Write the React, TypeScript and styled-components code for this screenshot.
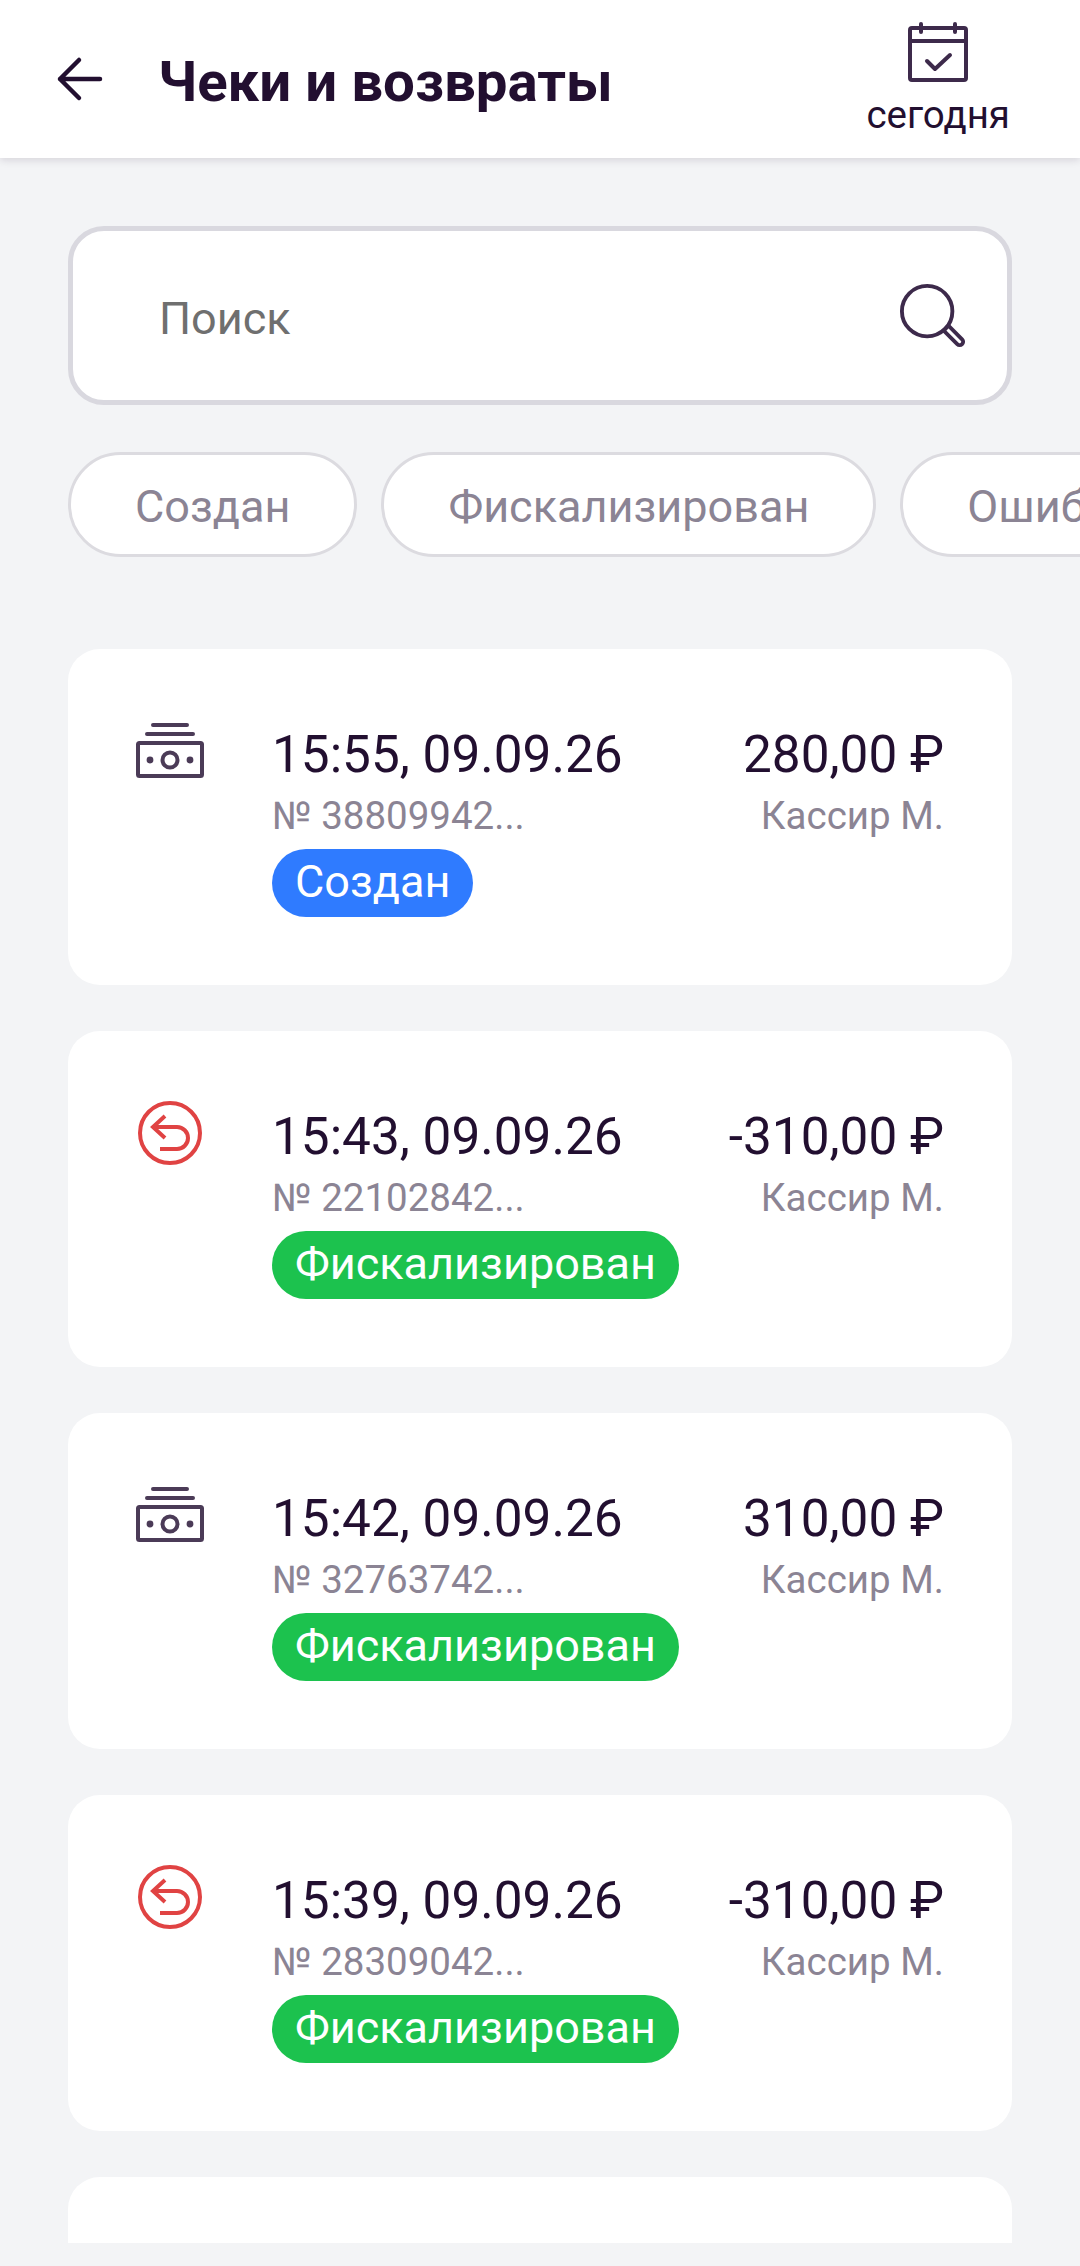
import React from 'react'
import styled, { createGlobalStyle } from 'styled-components'

const GlobalStyle = createGlobalStyle`
  html, body {
    margin: 0;
    padding: 0;
    background: #f3f4f6;
    font-family: Roboto, "Noto Sans", sans-serif;
  }
`

const Page = styled.div`
  display: flex;
  flex-direction: column;
  width: 1080px;
  height: 2266px;
  overflow: hidden;
  background: #f3f4f6;
  color: #220f30;
`

const Header = styled.header`
  display: flex;
  align-items: center;
  flex: none;
  height: 158px;
  padding: 0 70px 0 56px;
  box-sizing: border-box;
  background: #fff;
  box-shadow: 0 2px 8px rgba(34, 15, 48, 0.14);
  position: relative;
`

const BackButton = styled.div`
  display: flex;
  width: 48px;
  height: 48px;
  margin-right: 54px;
`

const Title = styled.h1`
  flex: 1;
  margin: 0;
  font-size: 56.4px;
  font-weight: 700;
  line-height: 64px;
  padding-top: 6px;
`

const DateButton = styled.div`
  display: flex;
  flex-direction: column;
  align-items: center;
  gap: 12px;
  font-size: 38.5px;
  line-height: 42px;
`

const Content = styled.main`
  display: flex;
  flex-direction: column;
  flex: 1;
  min-height: 0;
  padding-top: 68px;
`

const SearchBox = styled.div`
  display: flex;
  align-items: center;
  justify-content: space-between;
  flex: none;
  height: 179px;
  margin: 0 68px;
  padding: 0 42px 0 86px;
  box-sizing: border-box;
  border: 5px solid #d9d8df;
  border-radius: 36px;
  background: #fff;
  font-size: 45px;
  color: #6f6f6f;
`

const SearchLabel = styled.span`
  padding-top: 5px;
`

const Chips = styled.div`
  display: flex;
  flex: none;
  gap: 24px;
  margin-top: 47px;
  padding-left: 68px;
  overflow: hidden;
`

const Chip = styled.div`
  flex: none;
  height: 105px;
  padding: 0 64px;
  box-sizing: border-box;
  border: 3px solid #dcdbe0;
  border-radius: 53px;
  background: #fff;
  font-size: 45px;
  line-height: 103px;
  color: #8b8494;
`

const List = styled.div`
  display: flex;
  flex-direction: column;
  gap: 46px;
  height: 1594px;
  margin-top: 92px;
  overflow: hidden;
`

const Card = styled.article`
  display: flex;
  flex: none;
  height: 336px;
  margin: 0 68px;
  padding: 0 68px 0 0;
  box-sizing: border-box;
  border-radius: 32px;
  background: #fff;
`

const IconCell = styled.div<{ $top: number }>`
  display: flex;
  justify-content: center;
  align-items: flex-start;
  flex: none;
  width: 204px;
  padding-top: ${p => p.$top}px;
  box-sizing: border-box;
`

const Info = styled.div`
  display: flex;
  flex-direction: column;
  align-items: flex-start;
  flex: 1;
  padding-top: 71px;
`

const Time = styled.div`
  font-size: 51.3px;
  line-height: 70px;
`

const Sub = styled.div`
  margin-top: 3px;
  font-size: 38.5px;
  line-height: 46px;
  color: #8b8494;
`

const Badge = styled.div<{ $color: string }>`
  height: 68px;
  margin-top: 10px;
  padding: 0 23px;
  border-radius: 34px;
  background: ${p => p.$color};
  color: #fff;
  font-size: 45px;
  line-height: 66px;
`

const Side = styled.div`
  display: flex;
  flex-direction: column;
  align-items: flex-end;
  padding-top: 71px;
`

const CashIcon = () => (
  <svg width="68" height="56" viewBox="0 0 68 56" fill="none" stroke="#4b3b57" strokeWidth="4" strokeLinecap="round" strokeLinejoin="round">
    <path d="M17 3h34M11 12h46" />
    <rect x="2" y="21" width="64" height="33" rx="1.5" />
    <circle cx="34" cy="38" r="7.5" />
    <circle cx="14" cy="38" r="1.4" fill="#4b3b57" />
    <circle cx="54" cy="38" r="1.4" fill="#4b3b57" />
  </svg>
)

const ReturnIcon = () => (
  <svg width="64" height="64" viewBox="0 0 64 64" fill="none" stroke="#e04343" strokeWidth="4">
    <circle cx="32" cy="32" r="30" />
    <path d="M27 15L15 26 27 37" />
    <path d="M15 26h24a11 11 0 0 1 0 22H22" />
  </svg>
)

const receipts = [
  { time: '15:55, 09.09.26', num: '№ 38809942...', sum: '280,00 ₽', status: 'Создан', refund: false },
  { time: '15:43, 09.09.26', num: '№ 22102842...', sum: '-310,00 ₽', status: 'Фискализирован', refund: true },
  { time: '15:42, 09.09.26', num: '№ 32763742...', sum: '310,00 ₽', status: 'Фискализирован', refund: false },
  { time: '15:39, 09.09.26', num: '№ 28309042...', sum: '-310,00 ₽', status: 'Фискализирован', refund: true },
]

const App = () => (
  <Page>
    <GlobalStyle />
    <Header>
      <BackButton>
        <svg width="48" height="48" viewBox="0 0 48 48" fill="none" stroke="#220f30" strokeWidth="4.5" strokeLinecap="round" strokeLinejoin="round">
          <path d="M23 5L4 24l19 19M4 24h40" />
        </svg>
      </BackButton>
      <Title>Чеки и возвраты</Title>
      <DateButton>
        <svg width="60" height="60" viewBox="0 0 60 60" fill="none" stroke="#3d2a4b" strokeWidth="4" strokeLinecap="round" strokeLinejoin="round">
          <rect x="2" y="6" width="56" height="52" rx="2" />
          <path d="M2 19h56M13 2v8M47 2v8M19 39l8 8 15-14" />
        </svg>
        сегодня
      </DateButton>
    </Header>
    <Content>
      <SearchBox>
        <SearchLabel>Поиск</SearchLabel>
        <svg width="66" height="66" viewBox="0 0 68 68" fill="none" stroke="#3d2a4b" strokeWidth="4">
          <circle cx="29" cy="29" r="26" />
          <path d="M46 49l5-5 14 14a3.5 3.5 0 0 1-5 5z" />
        </svg>
      </SearchBox>
      <Chips>
        <Chip>Создан</Chip>
        <Chip>Фискализирован</Chip>
        <Chip>Ошибка</Chip>
      </Chips>
      <List>
        {receipts.map(r => (
          <Card key={r.time}>
            <IconCell $top={r.refund ? 70 : 73}>{r.refund ? <ReturnIcon /> : <CashIcon />}</IconCell>
            <Info>
              <Time>{r.time}</Time>
              <Sub>{r.num}</Sub>
              <Badge $color={r.status === 'Создан' ? '#2f7bff' : '#1cc24e'}>{r.status}</Badge>
            </Info>
            <Side>
              <Time>{r.sum}</Time>
              <Sub>Кассир М.</Sub>
            </Side>
          </Card>
        ))}
        <Card />
      </List>
    </Content>
  </Page>
)

export default App
